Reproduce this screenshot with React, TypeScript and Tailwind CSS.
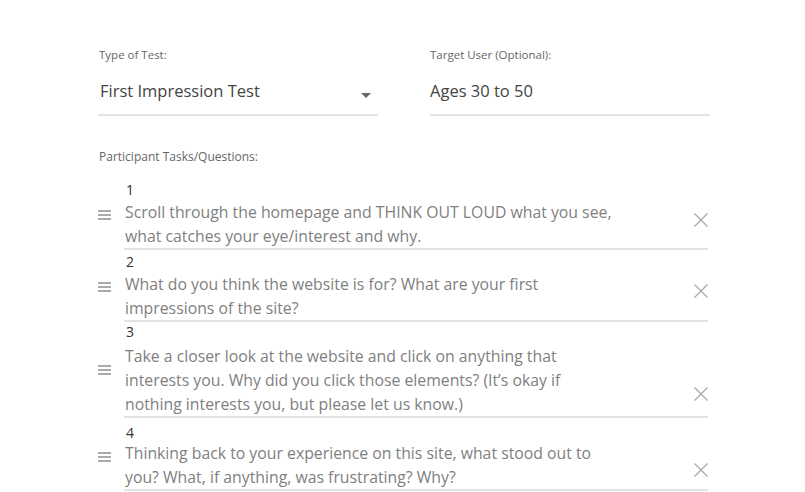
const tasks = [
  {
    n: "1",
    lines: [
      "Scroll through the homepage and THINK OUT LOUD what you see,",
      "what catches your eye/interest and why.",
    ],
    rowMt: "mt-0",
    textMt: "mt-0",
    xMt: "mt-[13px]",
  },
  {
    n: "2",
    lines: ["What do you think the website is for? What are your first", "impressions of the site?"],
    rowMt: "mt-[2px]",
    textMt: "mt-0",
    xMt: "mt-[12px]",
  },
  {
    n: "3",
    lines: [
      "Take a closer look at the website and click on anything that",
      "interests you. Why did you click those elements? (It’s okay if",
      "nothing interests you, but please let us know.)",
    ],
    rowMt: "mt-0",
    textMt: "mt-[2px]",
    xMt: "mt-[43px]",
  },
  {
    n: "4",
    lines: [
      "Thinking back to your experience on this site, what stood out to",
      "you? What, if anything, was frustrating? Why?",
    ],
    rowMt: "mt-[5px]",
    textMt: "-mt-[2px]",
    xMt: "mt-[22px]",
  },
];

function DragHandle() {
  return (
    <svg width="13" height="10" viewBox="0 0 13 10" className="shrink-0">
      <path d="M0 1h13M0 5h13M0 9h13" stroke="#8f8f8f" strokeWidth="1.4" />
    </svg>
  );
}

function Close() {
  return (
    <svg width="14" height="14" viewBox="0 0 14 14" className="shrink-0">
      <path d="M0.5 0.5l13 13M13.5 0.5l-13 13" stroke="#a8a8a8" strokeWidth="1.3" />
    </svg>
  );
}

export default function App() {
  return (
    <div
      className="w-[805px] h-[492px] overflow-hidden bg-white"
      style={{ fontFamily: '"Open Sans", "Liberation Sans", sans-serif' }}
    >
      <div className="pl-[98px] pr-[97px] pt-[47px]">
        {/* Top fields */}
        <div className="grid grid-cols-[280px_280px] gap-x-[52px]">
          <div>
            <div className="text-[11.5px] text-[#666] leading-4 pl-px">Type of Test:</div>
            <div className="mt-[16px] flex items-center justify-between border-b-2 border-[#e3e3e3] pb-[11px]">
              <span className="text-[16.5px] text-[#444] leading-6 pl-[2px]">First Impression Test</span>
              <svg width="10" height="5" viewBox="0 0 10 5" className="mr-[7px] mt-[8px]">
                <path d="M0 0h10L5 5z" fill="#666" />
              </svg>
            </div>
          </div>
          <div>
            <div className="text-[11.5px] text-[#666] leading-4">Target User (Optional):</div>
            <div className="mt-[16px] flex items-center border-b-2 border-[#e3e3e3] pb-[11px]">
              <span className="text-[16.5px] text-[#444] leading-6">Ages 30 to 50</span>
            </div>
          </div>
        </div>

        <div className="mt-[33px] text-[12px] text-[#666] leading-4 pl-px">Participant Tasks/Questions:</div>

        {/* Tasks */}
        <div className="mt-[15px] flex flex-col">
          {tasks.map((t) => (
            <div key={t.n} className={`flex items-center ${t.rowMt}`}>
              <div className="w-[26px] shrink-0">
                <DragHandle />
              </div>
              <div className="flex-1">
                <div className="text-[14px] text-[#333] leading-5 pl-[2px]">{t.n}</div>
                <div className={`flex items-start border-b-2 border-[#e3e3e3] ${t.textMt}`}>
                  <div className="flex-1 text-[15.8px] text-[#808080] leading-6 pl-px">
                    {t.lines.map((l) => (
                      <div key={l}>{l}</div>
                    ))}
                  </div>
                  <div className={t.xMt}>
                    <Close />
                  </div>
                </div>
              </div>
            </div>
          ))}
        </div>
      </div>
    </div>
  );
}
